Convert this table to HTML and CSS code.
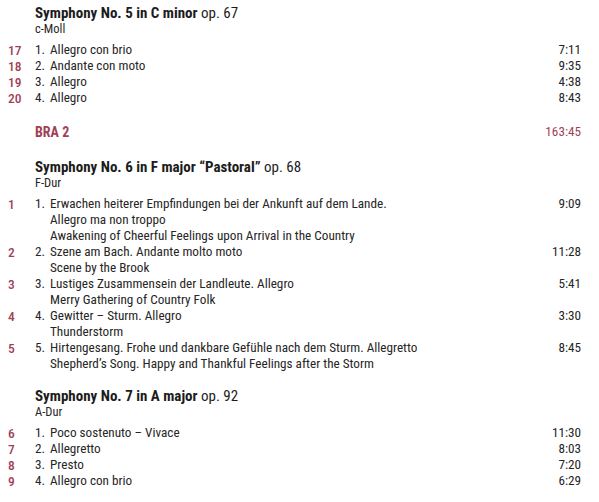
FILE: index.html
```html
<!DOCTYPE html>
<html>
<head>
<meta charset="utf-8">
<link rel="stylesheet" href="styles.css">
</head>
<body>
<div class="page">
  <section class="work">
    <h2 class="title"><b>Symphony No. 5 in C minor</b> op. 67</h2>
    <div class="key">c-Moll</div>
    <ol class="tracks">
      <li class="track"><span class="no">17</span><span class="idx">1.</span><span class="txt">Allegro con brio</span><span class="time">7:11</span></li>
      <li class="track"><span class="no">18</span><span class="idx">2.</span><span class="txt">Andante con moto</span><span class="time">9:35</span></li>
      <li class="track"><span class="no">19</span><span class="idx">3.</span><span class="txt">Allegro</span><span class="time">4:38</span></li>
      <li class="track"><span class="no">20</span><span class="idx">4.</span><span class="txt">Allegro</span><span class="time">8:43</span></li>
    </ol>
  </section>

  <div class="disc"><span class="disc-name">BRA 2</span><span class="disc-time">163:45</span></div>

  <section class="work">
    <h2 class="title"><b>Symphony No. 6 in F major “Pastoral”</b> op. 68</h2>
    <div class="key">F-Dur</div>
    <ol class="tracks">
      <li class="track"><span class="no">1</span><span class="idx">1.</span><span class="txt">Erwachen heiterer Empfindungen bei der Ankunft auf dem Lande.<br>Allegro ma non troppo<br>Awakening of Cheerful Feelings upon Arrival in the Country</span><span class="time">9:09</span></li>
      <li class="track"><span class="no">2</span><span class="idx">2.</span><span class="txt">Szene am Bach. Andante molto moto<br>Scene by the Brook</span><span class="time">11:28</span></li>
      <li class="track"><span class="no">3</span><span class="idx">3.</span><span class="txt">Lustiges Zusammensein der Landleute. Allegro<br>Merry Gathering of Country Folk</span><span class="time">5:41</span></li>
      <li class="track"><span class="no">4</span><span class="idx">4.</span><span class="txt">Gewitter – Sturm. Allegro<br>Thunderstorm</span><span class="time">3:30</span></li>
      <li class="track"><span class="no">5</span><span class="idx">5.</span><span class="txt">Hirtengesang. Frohe und dankbare Gefühle nach dem Sturm. Allegretto<br>Shepherd’s Song. Happy and Thankful Feelings after the Storm</span><span class="time">8:45</span></li>
    </ol>
  </section>

  <section class="work">
    <h2 class="title"><b>Symphony No. 7 in A major</b> op. 92</h2>
    <div class="key">A-Dur</div>
    <ol class="tracks">
      <li class="track"><span class="no">6</span><span class="idx">1.</span><span class="txt">Poco sostenuto – Vivace</span><span class="time">11:30</span></li>
      <li class="track"><span class="no">7</span><span class="idx">2.</span><span class="txt">Allegretto</span><span class="time">8:03</span></li>
      <li class="track"><span class="no">8</span><span class="idx">3.</span><span class="txt">Presto</span><span class="time">7:20</span></li>
      <li class="track"><span class="no">9</span><span class="idx">4.</span><span class="txt">Allegro con brio</span><span class="time">6:29</span></li>
    </ol>
  </section>
</div>
</body>
</html>
```

FILE: styles.css
```css
html, body {
  margin: 0;
  padding: 0;
  background: #ffffff;
}

body {
  font-family: "Roboto Condensed", Roboto, sans-serif;
  color: #262626;
  font-size: 13.2px;
  line-height: 16px;
}

.page {
  padding: 5px 18px 0 8px;
}

.work {
  display: flex;
  flex-direction: column;
}

.title {
  margin: 0 0 0 27px;
  font-size: 15px;
  line-height: 16px;
  font-weight: normal;
  color: #1c1c1c;
}

.title b {
  font-weight: bold;
}

.key {
  margin-left: 27px;
  font-size: 12.5px;
  line-height: 16px;
}

.tracks {
  list-style: none;
  margin: 5px 0 0 0;
  padding: 0;
  display: flex;
  flex-direction: column;
}

.track {
  display: grid;
  grid-template-columns: 27px 15px 1fr auto;
  align-items: start;
}

.no {
  color: #a13f57;
  font-weight: 500;
  font-size: 13.5px;
}

.time {
  text-align: right;
}

.disc {
  display: flex;
  justify-content: space-between;
  margin: 18px 0 19px 27px;
  color: #a13f57;
}

.disc-name {
  font-weight: bold;
  font-size: 14px;
}

.work + .work {
  margin-top: 16px;
}
```
